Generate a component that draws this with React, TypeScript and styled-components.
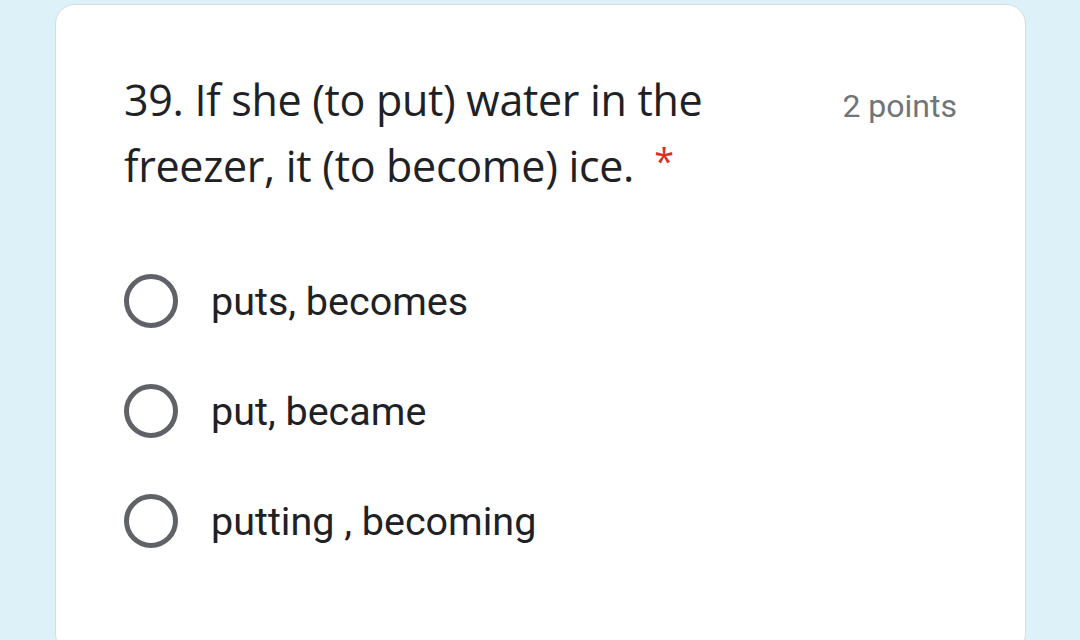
import React from 'react';
import styled, { createGlobalStyle } from 'styled-components';

const GlobalStyle = createGlobalStyle`
    html, body {
        margin: 0;
        padding: 0;
        background: #dcf2f8;
        height: 640px;
        overflow: hidden;
    }
`;

const Page = styled.div`
    width: 1080px;
    height: 640px;
    padding: 4px 0 0 55px;
    box-sizing: border-box;
`;

const Card = styled.div`
    width: 971px;
    height: 650px;
    box-sizing: border-box;
    background: #ffffff;
    border: 1.5px solid #d6dcdf;
    border-radius: 20px;
    padding: 62px 68px 0 68px;
`;

const Header = styled.div`
    display: flex;
    justify-content: space-between;
    align-items: flex-start;
`;

const Question = styled.div`
    font-family: 'Open Sans', 'Lato', sans-serif;
    font-size: 43px;
    line-height: 66px;
    color: #202124;
    max-width: 640px;
    letter-spacing: -0.3px;
`;

const Required = styled.span`
    display: inline-block;
    color: #d93025;
    font-size: 36px;
    line-height: 30px;
    height: 30px;
    margin-left: 20px;
    vertical-align: 8px;
`;

const Points = styled.div`
    font-family: Roboto, 'Liberation Sans', sans-serif;
    font-size: 32px;
    color: #70757a;
    padding-top: 20px;
`;

const Options = styled.div`
    display: flex;
    flex-direction: column;
    gap: 56px;
    margin-top: 75px;
`;

const Option = styled.label`
    display: flex;
    align-items: center;
    gap: 33px;
    height: 54px;
`;

const Radio = styled.span`
    width: 54px;
    height: 54px;
    box-sizing: border-box;
    border: 5px solid #5f6368;
    border-radius: 50%;
    flex: none;
`;

const OptionText = styled.span`
    font-family: Roboto, 'Liberation Sans', sans-serif;
    font-size: 39.5px;
    color: #202124;
`;

const options = ['puts, becomes', 'put, became', 'putting , becoming'];

export default function App() {
    return (
        <>
            <GlobalStyle />
            <Page>
                <Card>
                    <Header>
                        <Question>
                            39. If she (to put) water in the freezer, it (to become) ice.
                            <Required>*</Required>
                        </Question>
                        <Points>2 points</Points>
                    </Header>
                    <Options>
                        {options.map((o) => (
                            <Option key={o}>
                                <Radio />
                                <OptionText>{o}</OptionText>
                            </Option>
                        ))}
                    </Options>
                </Card>
            </Page>
        </>
    );
}
